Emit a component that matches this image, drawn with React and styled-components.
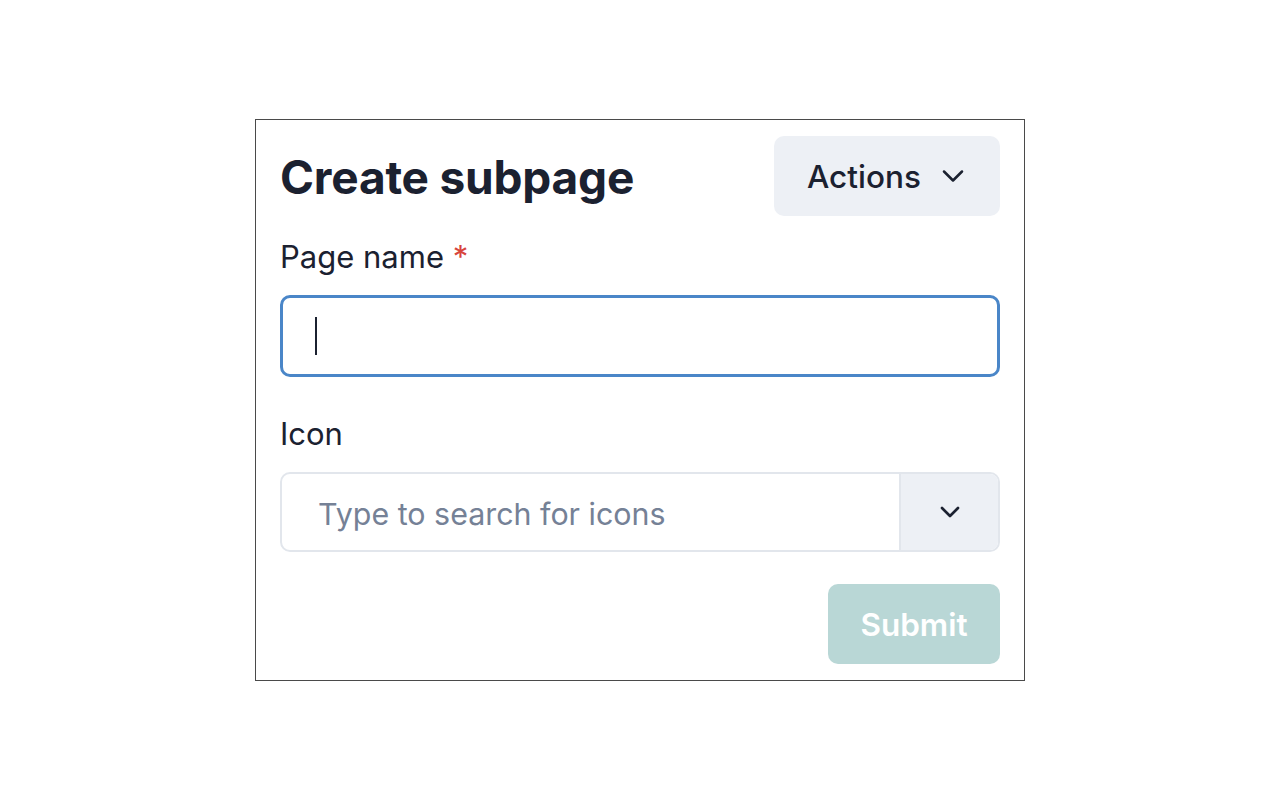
import styled, { createGlobalStyle } from "styled-components"
import { ChevronDown } from "lucide-react"

const GlobalStyle = createGlobalStyle`
  html, body {
    margin: 0;
    padding: 0;
    background: #ffffff;
    font-family: Inter, "Noto Sans", sans-serif;
    color: #1b2130;
  }
`

export default function App() {
    return (
        <Page>
            <GlobalStyle />
            <Card>
                <Header>
                    <Title>Create subpage</Title>
                    <ActionsButton>
                        Actions
                        <ChevronDown size={36} strokeWidth={1.7} />
                    </ActionsButton>
                </Header>
                <Field>
                    <Label>Page name <Required>*</Required></Label>
                    <TextBox>
                        <Caret />
                    </TextBox>
                </Field>
                <Field spaced>
                    <Label>Icon</Label>
                    <SelectBox>
                        <Placeholder>Type to search for icons</Placeholder>
                        <SelectToggle>
                            <ChevronDown size={32} strokeWidth={2} />
                        </SelectToggle>
                    </SelectBox>
                </Field>
                <Footer>
                    <SubmitButton disabled>Submit</SubmitButton>
                </Footer>
            </Card>
        </Page>
    )
}

const Page = styled.div`
    display: flex;
    justify-content: center;
    padding-top: 119px;
`

const Card = styled.div`
    width: 770px;
    box-sizing: border-box;
    border: 1px solid #4a4a4a;
    padding: 16px 24px 16px;
    display: flex;
    flex-direction: column;
`

const Header = styled.div`
    display: flex;
    align-items: center;
    justify-content: space-between;
    height: 80px;
`

const Title = styled.h1`
    margin: 2px 0 0;
    font-size: 46px;
    font-weight: 700;
    letter-spacing: -0.2px;
    color: #1b2130;
`

const ActionsButton = styled.button`
    display: flex;
    align-items: center;
    justify-content: space-between;
    width: 226px;
    height: 80px;
    padding: 0 29px 0 33px;
    border: none;
    border-radius: 10px;
    background: #edf0f5;
    font-family: Inter, sans-serif;
    font-size: 31.5px;
    font-weight: 500;
    color: #1b2130;
`

const Field = styled.div`
    display: flex;
    flex-direction: column;
    margin-top: ${p => (p.spaced ? "37px" : "21px")};
`

const Label = styled.label`
    font-size: 31px;
    line-height: 40px;
    font-weight: 400;
    color: #1b2130;
    margin-bottom: 18px;
`

const Required = styled.span`
    color: #d8453c;
`

const TextBox = styled.div`
    height: 82px;
    box-sizing: border-box;
    border: 3px solid #4a86c8;
    border-radius: 10px;
    display: flex;
    align-items: center;
    padding-left: 32px;
`

const Caret = styled.span`
    width: 2px;
    height: 38px;
    background: #1b2130;
`

const SelectBox = styled.div`
    height: 80px;
    box-sizing: border-box;
    border: 2px solid #e2e6ec;
    border-radius: 10px;
    display: flex;
    overflow: hidden;
`

const Placeholder = styled.div`
    flex: 1;
    display: flex;
    align-items: center;
    padding: 3px 0 0 36px;
    font-size: 30.4px;
    color: #758196;
`

const SelectToggle = styled.div`
    width: 97px;
    border-left: 2px solid #e2e6ec;
    background: #edf0f5;
    display: flex;
    align-items: center;
    justify-content: center;
    color: #1b2130;
`

const Footer = styled.div`
    display: flex;
    justify-content: flex-end;
    margin-top: 32px;
`

const SubmitButton = styled.button`
    width: 172px;
    height: 80px;
    border: none;
    border-radius: 10px;
    background: #b9d7d6;
    color: #ffffff;
    font-family: Inter, sans-serif;
    font-size: 31.5px;
    font-weight: 600;
`
